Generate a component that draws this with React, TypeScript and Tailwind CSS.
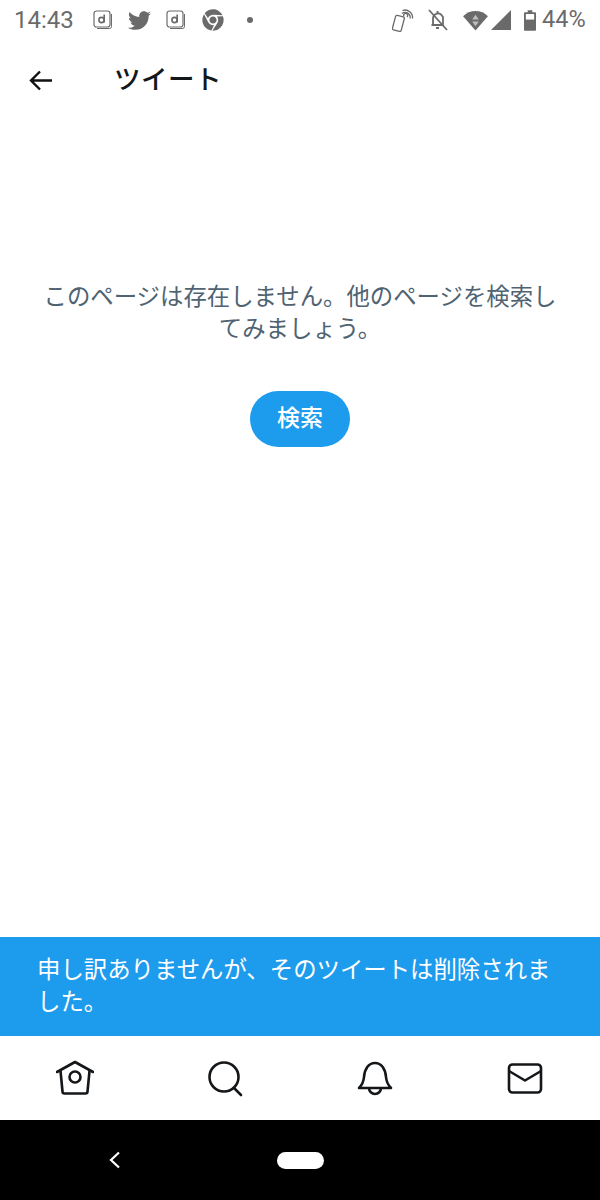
import React from 'react';
import { FaTwitter, FaChrome } from 'react-icons/fa';

const FONT = "font-['Roboto','Noto_Sans_CJK_JP',sans-serif]";

const DockoIcon = () => (
    <svg width="20" height="20" viewBox="0 0 20 20" fill="none" stroke="#6b6b6b">
        <rect x="1" y="1" width="16" height="16" rx="2.5" strokeWidth="1.2" fill="#fff" />
        <path d="M18.5 4v12.5a2 2 0 0 1-2 2H4" strokeWidth="1" />
        <circle cx="8.5" cy="10" r="2.6" strokeWidth="1.6" />
        <path d="M11.2 4.5v8" strokeWidth="1.6" />
    </svg>
);

const StatusBar = () => (
    <div className="flex h-10 shrink-0 items-center justify-between pl-[14px] pr-[14px] text-[#6a6a6a]">
        <div className="flex items-center">
            <span className="w-[60px] text-[24px] leading-none">14:43</span>
            <div className="ml-[19px] flex items-center">
                <DockoIcon />
                <FaTwitter className="ml-[15px] text-[23px]" />
                <div className="ml-[15px]"><DockoIcon /></div>
                <FaChrome className="ml-[16px] text-[22px]" />
                <div className="ml-[23px] h-[6px] w-[6px] rounded-full bg-[#6a6a6a]" />
            </div>
        </div>
        <div className="flex items-center">
            <svg width="22" height="24" viewBox="0 0 22 24" fill="none" stroke="#6a6a6a" strokeWidth="1.3">
                <rect x="2" y="8" width="9" height="15" rx="1.5" transform="rotate(15 7 15)" />
                <path d="M12 8.500a2 2 0 1 1 3 .5" />
                <path d="M10 5.500a5 5 0 0 1 8 5" />
                <path d="M10.500 2.500a7.500 7.500 0 0 1 10 8" />
            </svg>
            <svg className="ml-[13px]" width="22" height="24" viewBox="0 0 22 24" fill="none" stroke="#6a6a6a" strokeWidth="1.8">
                <path d="M6 17V10.500a5 5 0 0 1 8-4l2 2.500v8H4.500" />
                <path d="M9 20h3M10.500 3v2" />
                <path d="M2 2l18 20" />
            </svg>
            <svg className="ml-[14px]" width="25" height="21" viewBox="0 0 26 22">
                <path d="M0 6.500C3.500 3 8 1 13 1s9.500 2 13 5.500L13 21.500z" fill="#6a6a6a" />
                <path d="M13 5l3.500 5h-7zM13 17l-3.500-5h7z" fill="#bdbdbd" />
            </svg>
            <svg className="ml-[3px]" width="20" height="20" viewBox="0 0 21 21">
                <path d="M21 0v21H0z" fill="#6a6a6a" />
            </svg>
            <svg className="ml-[13px]" width="12" height="21" viewBox="0 0 13 22">
                <path d="M4 0h5v2h3a1 1 0 0 1 1 1v18a1 1 0 0 1-1 1H1a1 1 0 0 1-1-1V3a1 1 0 0 1 1-1h3z" fill="#6a6a6a" />
                <rect x="2" y="4" width="9" height="6" fill="#fff" />
            </svg>
            <span className="ml-[6px] w-[44px] text-[23.5px] leading-none">44%</span>
        </div>
    </div>
);

const Header = () => (
    <div className="flex h-20 shrink-0 items-center">
        <svg className="ml-[29px]" width="24" height="24" viewBox="0 0 24 24" fill="none" stroke="#111" strokeWidth="2.4">
            <path d="M23 12.500H2.500M11 3.500l-9 9 9 9" />
        </svg>
        <h1 className="ml-[61px] text-[26.5px] leading-none font-medium tracking-[0.5px] text-[#14171a]">ツイート</h1>
    </div>
);

const BottomNav = () => (
    <div className="grid h-[84px] shrink-0 grid-cols-4 items-center bg-white">
        <div className="flex justify-center">
            <svg width="38" height="38" viewBox="0 0 38 38" fill="none" stroke="#14171a" strokeWidth="2.6" strokeLinejoin="round">
                <path d="M1 13L19 3l18 10" strokeLinecap="round" />
                <path d="M4.500 12l2 20.500a2 2 0 0 0 2 2h21a2 2 0 0 0 2-2l2-20.500" />
                <circle cx="19" cy="18" r="5.500" />
            </svg>
        </div>
        <div className="flex justify-center">
            <svg width="38" height="38" viewBox="0 0 38 38" fill="none" stroke="#14171a" strokeWidth="2.6" strokeLinecap="round">
                <circle cx="18" cy="18" r="14.500" />
                <path d="M28 29l7 7" />
            </svg>
        </div>
        <div className="flex justify-center">
            <svg width="38" height="38" viewBox="0 0 38 38" fill="none" stroke="#14171a" strokeWidth="2.6" strokeLinejoin="round">
                <path d="M3 29h32c-3-3-4.500-5.500-5-11-.6-8-4.500-14-11-14S8.600 10 8 18c-.5 5.500-2 8-5 11z" />
                <path d="M13 29a6 6 0 0 0 12 0" />
            </svg>
        </div>
        <div className="flex justify-center">
            <svg width="38" height="38" viewBox="0 0 38 38" fill="none" stroke="#14171a" strokeWidth="2.6" strokeLinejoin="round">
                <rect x="3" y="5.500" width="32" height="28" rx="3.500" />
                <path d="M3 12l16 9.500 16-9.500" />
            </svg>
        </div>
    </div>
);

const NavBar = () => (
    <div className="relative flex h-20 shrink-0 items-center justify-center bg-black">
        <svg className="absolute left-[108px] top-[31px]" width="14" height="18" viewBox="0 0 14 18" fill="none" stroke="#fff" strokeWidth="2.2">
            <path d="M11 1.500L3 9l8 7.500" />
        </svg>
        <div className="h-[17px] w-[47px] rounded-full bg-white" />
    </div>
);

export default function App() {
    return (
        <div className={`flex h-[1200px] w-[600px] flex-col overflow-hidden bg-white ${FONT}`}>
            <StatusBar />
            <Header />
            <main className="flex flex-1 flex-col items-center pt-[161px]">
                <p className="w-[524px] text-center text-[23.4px] leading-[32px] text-[#4f6372]">
                    このページは存在しません。他のページを検索してみましょう。
                </p>
                <button className="mt-[46px] h-14 w-[100px] rounded-full bg-[#1d9bec] text-[23px] font-medium text-white">
                    検索
                </button>
            </main>
            <div className="flex h-[99px] shrink-0 items-center bg-[#1d9bec] pb-[2px] pl-[37px] pr-[36px] text-[23.4px] leading-[32px] text-white">
                <p>申し訳ありませんが、そのツイートは削除されました。</p>
            </div>
            <BottomNav />
            <NavBar />
        </div>
    );
}
